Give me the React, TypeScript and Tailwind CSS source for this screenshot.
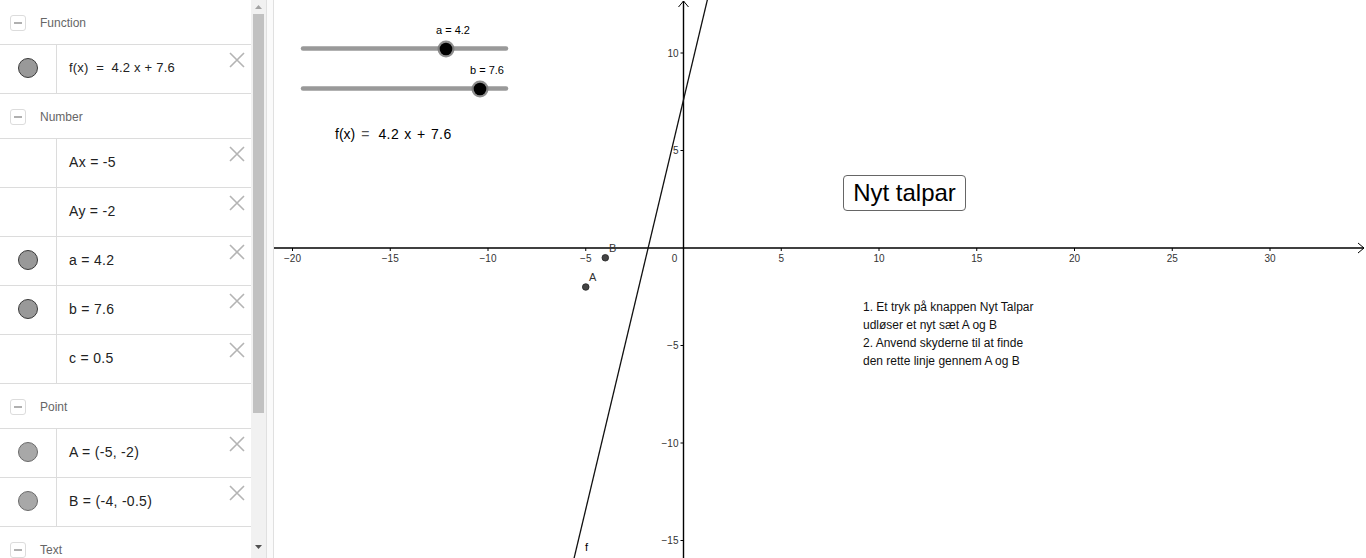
import React from 'react';

const font = { fontFamily: '"Liberation Sans", Arial, sans-serif' };

// graph coordinate helpers (page pixels)
const ox = 683.5;
const oy = 248;
const sx = 19.55;
const sy = 19.5;
const X = (u: number) => ox + u * sx;
const Y = (v: number) => oy - v * sy;

const CloseIcon: React.FC = () => (
  <svg width="16" height="16" viewBox="0 0 16 16" className="absolute right-[6px] top-[7px]">
    <path d="M1 1 L15 15 M15 1 L1 15" stroke="#b4b4b4" strokeWidth="1.6" fill="none" />
  </svg>
);

const Dot: React.FC<{ light?: boolean }> = ({ light }) => (
  <div
    className={
      light
        ? 'w-[20px] h-[20px] rounded-full bg-[#a8a8a8] border border-[#6a6a6a] -mt-[3px]'
        : 'w-[20px] h-[20px] rounded-full bg-[#999999] border border-[#3a3a3a] -mt-[3px]'
    }
  />
);

const Header: React.FC<{ title: string }> = ({ title }) => (
  <div className="h-[45px] shrink-0 border-b border-[#dcdcdc] flex items-center pt-[2px]">
    <div className="ml-[10px] w-[16px] h-[16px] rounded-[3px] border border-[#dcdcdc] flex items-center justify-center">
      <div className="w-[8px] h-[1.5px] bg-[#b0b0b0]" />
    </div>
    <span className="ml-[14px] text-[12px] text-[#666666]">{title}</span>
  </div>
);

interface RowProps {
  dot?: 'dark' | 'light';
  text: string;
  small?: boolean;
}

const Row: React.FC<RowProps> = ({ dot, text, small }) => (
  <div className="h-[49px] shrink-0 border-b border-[#dcdcdc] flex">
    <div className="w-[57px] shrink-0 border-r border-[#dcdcdc] flex items-center justify-center pr-[1px]">
      {dot && <Dot light={dot === 'light'} />}
    </div>
    <div className="flex-1 relative flex items-center pl-[12px] pb-[2px]">
      <span
        className={small ? 'text-[13px] text-[#222] tracking-[0.2px] whitespace-pre' : 'text-[14px] text-[#222] tracking-[0.3px] whitespace-pre'}
      >
        {text}
      </span>
      <CloseIcon />
    </div>
  </div>
);

const AlgebraView: React.FC = () => (
  <div className="w-[251px] shrink-0 flex flex-col overflow-hidden bg-white">
    <Header title="Function" />
    <Row dot="dark" text="f(x)  =  4.2 x + 7.6" small />
    <Header title="Number" />
    <Row text="Ax = -5" />
    <Row text="Ay = -2" />
    <Row dot="dark" text="a = 4.2" />
    <Row dot="dark" text="b = 7.6" />
    <Row text="c = 0.5" />
    <Header title="Point" />
    <Row dot="light" text="A = (-5, -2)" />
    <Row dot="light" text="B = (-4, -0.5)" />
    <Header title="Text" />
  </div>
);

const Scrollbar: React.FC = () => (
  <div className="w-[15px] shrink-0 bg-[#f1f1f1] flex flex-col items-center">
    <svg width="15" height="14" viewBox="0 0 15 14">
      <path d="M4 9 L7.5 5 L11 9 Z" fill="#a3a3a3" />
    </svg>
    <div className="w-[11px] h-[399px] bg-[#c1c1c1]" />
    <div className="flex-1" />
    <svg width="15" height="14" viewBox="0 0 15 14" className="mb-[4px]">
      <path d="M4 5 L11 5 L7.5 9 Z" fill="#505050" />
    </svg>
  </div>
);

const xTicks = [-20, -15, -10, -5, 5, 10, 15, 20, 25, 30];
const yTicks = [10, 5, -5, -10, -15];

const Slider: React.FC<{ y: number; knob: number; label: string; labelX: number }> = ({ y, knob, label, labelX }) => (
  <g>
    <text x={labelX} y={y - 15} fontSize="11" fill="#000" textAnchor="middle" style={font}>
      {label}
    </text>
    <line x1="303" y1={y} x2="506" y2={y} stroke="#999999" strokeWidth="4.5" strokeLinecap="round" />
    <circle cx={knob} cy={y + 0.5} r="8.5" fill="#7a7a7a" opacity="0.85" />
    <circle cx={knob} cy={y + 0.5} r="6.3" fill="#000" />
  </g>
);

const GraphicsView: React.FC = () => {
  const vTop = (oy + 2) / sy;
  const vBot = (oy - 560) / sy;
  const lx1 = X((vTop - 7.6) / 4.2);
  const lx2 = X((vBot - 7.6) / 4.2);
  return (
    <div className="flex-1 relative bg-white overflow-hidden">
      <svg width="1092" height="558" viewBox="274 0 1092 558" className="absolute inset-0" style={font}>
        {/* axes */}
        <line x1="274" y1={oy} x2="1364" y2={oy} stroke="#000" strokeWidth="1.4" />
        <path d={`M1358 ${oy - 5} L1364 ${oy} L1358 ${oy + 5}`} stroke="#000" strokeWidth="1" fill="none" />
        <line x1={ox} y1="1" x2={ox} y2="558" stroke="#000" strokeWidth="1.4" />
        <path d={`M${ox - 5} 7 L${ox} 1 L${ox + 5} 7`} stroke="#000" strokeWidth="1" fill="none" />

        {xTicks.map((t) => (
          <g key={`x${t}`}>
            <line x1={X(t)} y1={oy} x2={X(t)} y2={oy + 3} stroke="#000" strokeWidth="1" />
            <text x={X(t)} y={oy + 14} fontSize="10" fill="#333" textAnchor="middle">
              {t < 0 ? `\u2212${-t}` : t}
            </text>
          </g>
        ))}
        <text x={ox - 9} y={oy + 14} fontSize="10" fill="#333" textAnchor="middle">
          0
        </text>
        {yTicks.map((t) => (
          <g key={`y${t}`}>
            <line x1={ox - 3} y1={Y(t)} x2={ox} y2={Y(t)} stroke="#000" strokeWidth="1" />
            <text x={ox - 5} y={Y(t) + 3.5} fontSize="10" fill="#333" textAnchor="end">
              {t < 0 ? `\u2212${-t}` : t}
            </text>
          </g>
        ))}

        {/* function f */}
        <line x1={lx1} y1="-2" x2={lx2} y2="560" stroke="#111" strokeWidth="1.3" />
        <text x="585" y="551" fontSize="11" fill="#000">
          f
        </text>

        {/* points */}
        <circle cx={X(-5)} cy={Y(-2)} r="3.3" fill="#444" stroke="#222" strokeWidth="0.8" />
        <text x="589" y="281" fontSize="11" fill="#333">
          A
        </text>
        <circle cx={X(-4)} cy={Y(-0.5)} r="3.3" fill="#444" stroke="#222" strokeWidth="0.8" />
        <text x="609" y="252" fontSize="11" fill="#333">
          B
        </text>

        {/* sliders */}
        <Slider y={48.5} knob={446} label="a = 4.2" labelX={453} />
        <Slider y={88.5} knob={480} label="b = 7.6" labelX={487} />

        <text x="335" y="139" fontSize="14" fill="#000">
          f(x)
          <tspan fill="#555" dx="6">=</tspan>
          <tspan dx="9" letterSpacing="0.4" wordSpacing="1">4.2 x + 7.6</tspan>
        </text>
      </svg>

      {/* button */}
      <div className="absolute left-[569px] top-[175px] w-[123px] h-[36px] rounded-[4px] border-[1.5px] border-[#666] bg-white flex items-center justify-center">
        <span className="text-[24px] leading-none text-black" style={font}>
          Nyt talpar
        </span>
      </div>

      {/* instructions */}
      <div className="absolute left-[589px] top-[298px] text-[12px] leading-[18px] text-[#111]" style={font}>
        <div>1. Et tryk på knappen Nyt Talpar</div>
        <div>udløser et nyt sæt A og B</div>
        <div>2. Anvend skyderne til at finde</div>
        <div>den rette linje gennem A og B</div>
      </div>
    </div>
  );
};

const App: React.FC = () => {
  return (
    <div className="w-[1366px] h-[558px] flex overflow-hidden bg-white" style={font}>
      <AlgebraView />
      <Scrollbar />
      <div className="w-[8px] shrink-0 border-l border-r border-[#e0e0e0] bg-[#fafafa]" />
      <GraphicsView />
    </div>
  );
};

export default App;
